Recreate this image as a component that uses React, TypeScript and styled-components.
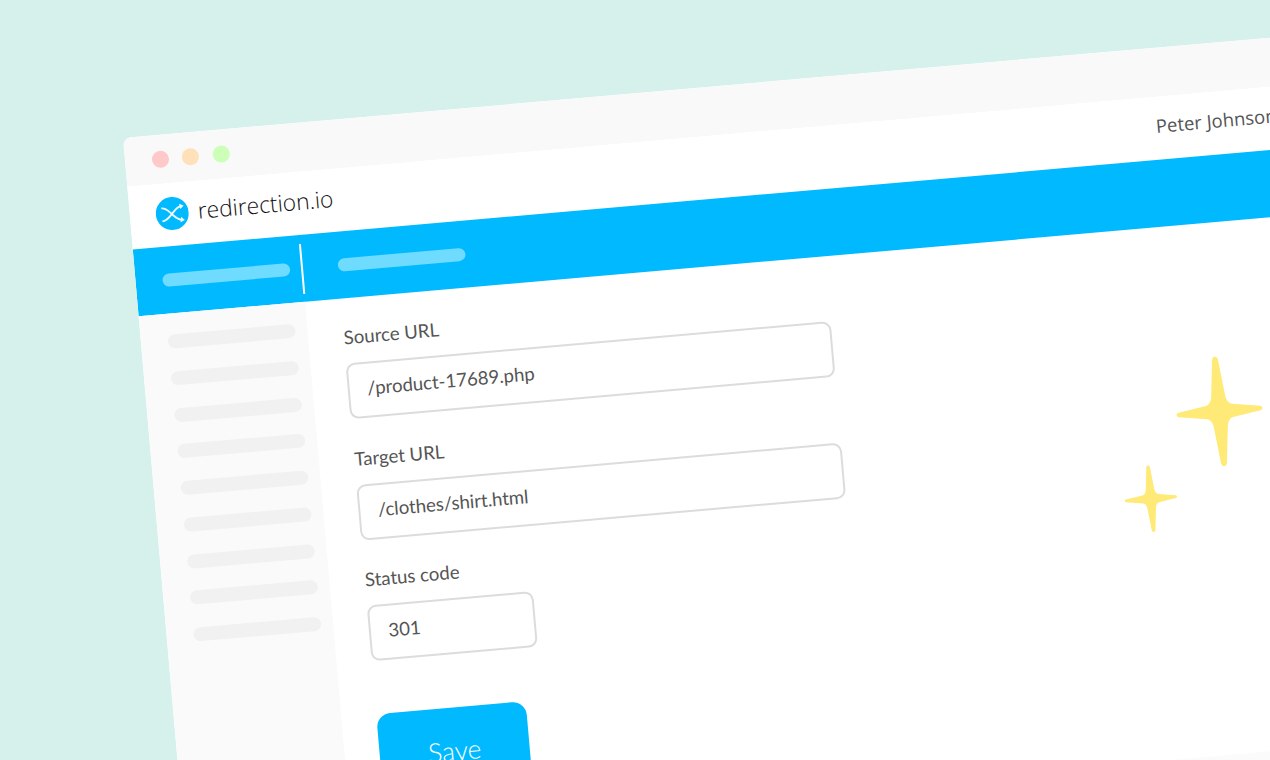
import styled, { createGlobalStyle } from "styled-components";

const sidebarItems = [0, 1, 2, 3, 4, 5, 6, 7, 8];

const STAR_PATH =
  "M50 1 C52 1 53 2 53.5 4 L58 36 C59 41 61 43 65 44 L97 48 C99 48.5 99.5 49 99.5 50 C99.5 51 99 51.5 97 52 L65 56 C61 57 59 59 58 64 L53.5 96 C53 98 52 99 50 99 C48 99 47 98 46.5 96 L42 64 C41 59 39 57 35 56 L3 52 C1 51.5 0.5 51 0.5 50 C0.5 49 1 48.5 3 48 L35 44 C39 43 41 41 42 36 L46.5 4 C47 2 48 1 50 1 Z";

const GlobalStyle = createGlobalStyle`
  html, body {
    margin: 0;
    padding: 0;
    background: #d6f1ec;
    overflow: hidden;
  }
`;

const App = () => {
  return (
    <>
      <GlobalStyle />
      <Page>
        <BrowserWindow>
          <TitleBar>
            <Dot color="#ffc9c9" />
            <Dot color="#ffe0b8" />
            <Dot color="#ccffb8" />
          </TitleBar>
          <Header>
            <Brand>
              <LogoMark viewBox="0 0 33 33" aria-hidden="true">
                <circle cx="16.5" cy="16.5" r="16.5" fill="#00b9ff" />
                <path
                  d="M6 10.5 C11 10.5 13 14 16.5 17.5 C20 21 22 23.5 26 23.5 M6 23.5 C11 23.5 13 20 16.5 16.5 C20 13 22 10 26 10"
                  fill="none"
                  stroke="#f2fbff"
                  strokeWidth="1.8"
                />
                <path d="M24 7.3 L28.5 9.5 L25 12.8 Z M25 20.6 L28.5 24 L24 26 Z" fill="#f2fbff" />
              </LogoMark>
              <BrandName>redirection.io</BrandName>
            </Brand>
            <UserName>Peter Johnson</UserName>
          </Header>
          <NavBar>
            <NavPill />
            <NavDivider />
            <NavPill />
          </NavBar>
          <Body>
            <Sidebar>
              {sidebarItems.map((item) => (
                <SidebarPill key={item} />
              ))}
            </Sidebar>
            <Main>
              <Field>
                <FieldLabel>Source URL</FieldLabel>
                <FieldInput>/product-17689.php</FieldInput>
              </Field>
              <Field>
                <FieldLabel>Target URL</FieldLabel>
                <FieldInput>/clothes/shirt.html</FieldInput>
              </Field>
              <Field>
                <FieldLabel>Status code</FieldLabel>
                <FieldInput $short>301</FieldInput>
              </Field>
              <SaveButton>Save</SaveButton>
              <Footer />
            </Main>
          </Body>
          <Star $x={1068} $y={367.5} $w={87} $h={112} viewBox="0 0 100 100" preserveAspectRatio="none">
            <path d={STAR_PATH} fill="#ffe977" />
          </Star>
          <Star $x={992} $y={449} $w={53} $h={68} viewBox="0 0 100 100" preserveAspectRatio="none">
            <path d={STAR_PATH} fill="#ffe977" />
          </Star>
        </BrowserWindow>
      </Page>
    </>
  );
};

const Page = styled.div`
  position: relative;
  width: 1270px;
  height: 760px;
  overflow: hidden;
  background: #d6f1ec;
`;

const BrowserWindow = styled.div`
  position: absolute;
  left: 122.8px;
  top: 137.5px;
  width: 1260px;
  height: 780px;
  display: flex;
  flex-direction: column;
  background: #fff;
  border-radius: 8px 0 0 0;
  overflow: hidden;
  transform: rotate(-5deg);
  transform-origin: 0 0;
`;

const TitleBar = styled.div`
  height: 49px;
  flex-shrink: 0;
  display: flex;
  align-items: center;
  gap: 13.6px;
  padding-left: 26.5px;
  background: #f9f9f9;
`;

const Dot = styled.span<{ color: string }>`
  width: 17px;
  height: 17px;
  border-radius: 50%;
  background: ${(p) => p.color};
`;

const Header = styled.div`
  height: 63px;
  box-sizing: border-box;
  flex-shrink: 0;
  display: flex;
  align-items: center;
  justify-content: space-between;
  padding: 0 0 2px 25.7px;
  background: #fff;
`;

const Brand = styled.div`
  display: flex;
  align-items: center;
  gap: 9px;
`;

const LogoMark = styled.svg`
  width: 33px;
  height: 33px;
`;

const BrandName = styled.span`
  margin: -3px 0 0 0.5px;
  font-family: "Open Sans", "Liberation Sans", sans-serif;
  font-weight: 300;
  font-size: 22.8px;
  color: #111;
`;

const UserName = styled.span`
  width: 230px;
  margin-top: -4px;
  font-family: "Open Sans", "Liberation Sans", sans-serif;
  font-size: 18.5px;
  color: #555;
  white-space: nowrap;
`;

const NavBar = styled.div`
  height: 67px;
  flex-shrink: 0;
  display: flex;
  align-items: center;
  padding-left: 26.7px;
  background: #00b9ff;
`;

const NavPill = styled.span`
  width: 128px;
  height: 13px;
  border-radius: 7px;
  background: #6fdcff;
`;

const NavDivider = styled.span`
  width: 2px;
  height: 50px;
  margin: 0 35px 0 11px;
  background: #fff;
`;

const Body = styled.div`
  flex: 1;
  display: flex;
`;

const Sidebar = styled.div`
  width: 166.5px;
  flex-shrink: 0;
  display: flex;
  flex-direction: column;
  gap: 22.75px;
  padding: 21px 0 0 26.7px;
  box-sizing: border-box;
  background: #fafafa;
`;

const SidebarPill = styled.span`
  width: 128px;
  height: 14px;
  border-radius: 7px;
  background: #f1f1f1;
`;

const Main = styled.div`
  flex: 1;
  display: flex;
  flex-direction: column;
  padding: 26px 0 0 35.5px;
`;

const Field = styled.div`
  display: flex;
  flex-direction: column;
  gap: 13px;
  margin-bottom: 26.5px;
`;

const FieldLabel = styled.label`
  padding-left: 0.5px;
  font-family: "Lato", "Liberation Sans", sans-serif;
  font-size: 18.6px;
  line-height: 26px;
  color: #555;
`;

const FieldInput = styled.div<{ $short?: boolean }>`
  width: ${(p) => (p.$short ? "167px" : "487px")};
  height: 56px;
  box-sizing: border-box;
  display: flex;
  align-items: center;
  padding: 0 0 4px 17.5px;
  border: 2px solid #dcdcdc;
  border-radius: 9px;
  background: #fff;
  font-family: "Lato", "Liberation Sans", sans-serif;
  font-size: 18.6px;
  color: #555;
`;

const SaveButton = styled.button`
  width: 150px;
  height: 85px;
  flex-shrink: 0;
  margin-top: 26.5px;
  border: 0;
  border-radius: 14px;
  background: #00b9ff;
  color: #fff;
  font-family: "Lato", "Liberation Sans", sans-serif;
  font-size: 26.5px;
  font-weight: 300;
`;

const Footer = styled.div`
  flex: 1;
  margin: 30px 0 0 -36px;
  background: #fbfbfb;
`;

const Star = styled.svg<{ $x: number; $y: number; $w: number; $h: number }>`
  position: absolute;
  left: ${(p) => p.$x - p.$w / 2}px;
  top: ${(p) => p.$y - p.$h / 2}px;
  width: ${(p) => p.$w}px;
  height: ${(p) => p.$h}px;
`;

export default App;
